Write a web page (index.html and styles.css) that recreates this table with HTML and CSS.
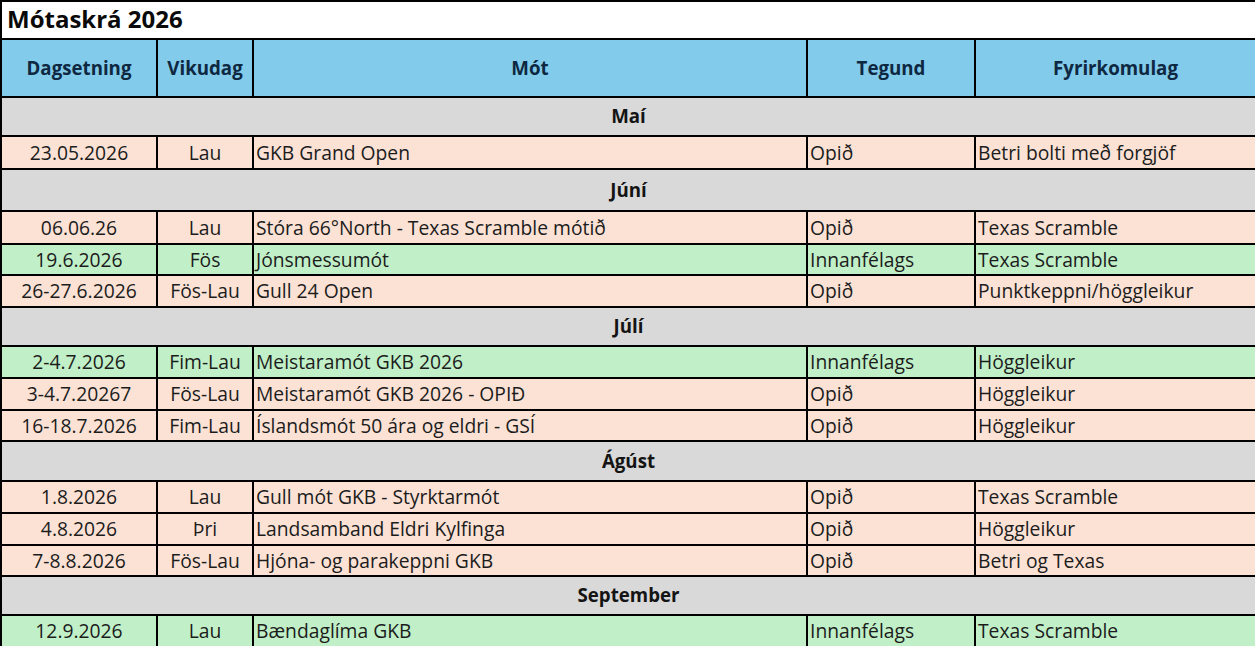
FILE: index.html
```html
<!DOCTYPE html>
<html lang="is">
<head>
<meta charset="utf-8">
<title>Mótaskrá 2026</title>
<link rel="stylesheet" href="styles.css">
</head>
<body>
<div class="sheet">
  <div class="row title-row"><div class="cell title">Mótaskrá 2026</div></div>
  <div class="row head-row">
    <div class="cell hd">Dagsetning</div>
    <div class="cell hd">Vikudag</div>
    <div class="cell hd">Mót</div>
    <div class="cell hd">Tegund</div>
    <div class="cell hd">Fyrirkomulag</div>
  </div>

  <div class="row month"><div class="cell">Maí</div></div>
  <div class="row data peach h33">
    <div class="cell c">23.05.2026</div><div class="cell c">Lau</div><div class="cell">GKB Grand Open</div><div class="cell">Opið</div><div class="cell">Betri bolti með forgjöf</div>
  </div>

  <div class="row month tall"><div class="cell">Júní</div></div>
  <div class="row data peach h33">
    <div class="cell c">06.06.26</div><div class="cell c">Lau</div><div class="cell">Stóra 66°North - Texas Scramble mótið</div><div class="cell">Opið</div><div class="cell">Texas Scramble</div>
  </div>
  <div class="row data green h31">
    <div class="cell c">19.6.2026</div><div class="cell c">Fös</div><div class="cell">Jónsmessumót</div><div class="cell">Innanfélags</div><div class="cell">Texas Scramble</div>
  </div>
  <div class="row data peach">
    <div class="cell c">26-27.6.2026</div><div class="cell c">Fös-Lau</div><div class="cell">Gull 24 Open</div><div class="cell">Opið</div><div class="cell">Punktkeppni/höggleikur</div>
  </div>

  <div class="row month"><div class="cell">Júlí</div></div>
  <div class="row data green">
    <div class="cell c">2-4.7.2026</div><div class="cell c">Fim-Lau</div><div class="cell">Meistaramót GKB 2026</div><div class="cell">Innanfélags</div><div class="cell">Höggleikur</div>
  </div>
  <div class="row data peach">
    <div class="cell c">3-4.7.20267</div><div class="cell c">Fös-Lau</div><div class="cell">Meistaramót GKB 2026 - OPIÐ</div><div class="cell">Opið</div><div class="cell">Höggleikur</div>
  </div>
  <div class="row data peach h31">
    <div class="cell c">16-18.7.2026</div><div class="cell c">Fim-Lau</div><div class="cell">Íslandsmót 50 ára og eldri - GSÍ</div><div class="cell">Opið</div><div class="cell">Höggleikur</div>
  </div>

  <div class="row month h40"><div class="cell">Ágúst</div></div>
  <div class="row data peach">
    <div class="cell c">1.8.2026</div><div class="cell c">Lau</div><div class="cell">Gull mót GKB - Styrktarmót</div><div class="cell">Opið</div><div class="cell">Texas Scramble</div>
  </div>
  <div class="row data peach">
    <div class="cell c">4.8.2026</div><div class="cell c">Þri</div><div class="cell">Landsamband Eldri Kylfinga</div><div class="cell">Opið</div><div class="cell">Höggleikur</div>
  </div>
  <div class="row data peach h31">
    <div class="cell c">7-8.8.2026</div><div class="cell c">Fös-Lau</div><div class="cell">Hjóna- og parakeppni GKB</div><div class="cell">Opið</div><div class="cell">Betri og Texas</div>
  </div>

  <div class="row month"><div class="cell">September</div></div>
  <div class="row data green">
    <div class="cell c">12.9.2026</div><div class="cell c">Lau</div><div class="cell">Bændaglíma GKB</div><div class="cell">Innanfélags</div><div class="cell">Texas Scramble</div>
  </div>
</div>
</body>
</html>
```

FILE: styles.css
```css
* { box-sizing: border-box; }

html, body {
  margin: 0;
  padding: 0;
  background: #ffffff;
  overflow: hidden;
}

body {
  font-family: "Open Sans", "Noto Sans", sans-serif;
  color: #1c1c1c;
}

.sheet {
  width: 1255px;
  display: flex;
  flex-direction: column;
}

.row {
  display: grid;
  grid-template-columns: 154px 96px 554px 168px 281px;
  height: 32px;
  border-top: 2px solid #000;
  border-left: 2px solid #000;
}

.cell {
  display: flex;
  align-items: center;
  padding-left: 2px;
  white-space: nowrap;
  overflow: hidden;
  font-size: 19.3px;
  line-height: 1;
}

.data .cell + .cell,
.head-row .cell + .cell {
  border-left: 2px solid #000;
}

.cell.c {
  justify-content: center;
  padding-left: 0;
}

.title-row {
  display: flex;
  height: 38px;
  background: #ffffff;
}

.title {
  font-size: 24px;
  font-weight: 700;
  color: #0a0a0a;
  padding-left: 5px;
  padding-bottom: 2px;
}

.head-row {
  height: 58px;
  background: #83cbeb;
}

.hd {
  justify-content: center;
  padding-left: 0;
  font-size: 18.7px;
  font-weight: 700;
  color: #0e2841;
}

.month {
  display: flex;
  height: 39px;
  background: #d9d9d9;
}

.month.tall { height: 42px; }
.month.h40 { height: 40px; }

.month .cell {
  flex: 1;
  justify-content: center;
  padding-left: 0;
  font-size: 18.7px;
  font-weight: 700;
  color: #141414;
}

.data.h33 { height: 33px; }
.data.h31 { height: 31px; }

.peach { background: #fbe2d5; }
.green { background: #c1f0c8; }
```
